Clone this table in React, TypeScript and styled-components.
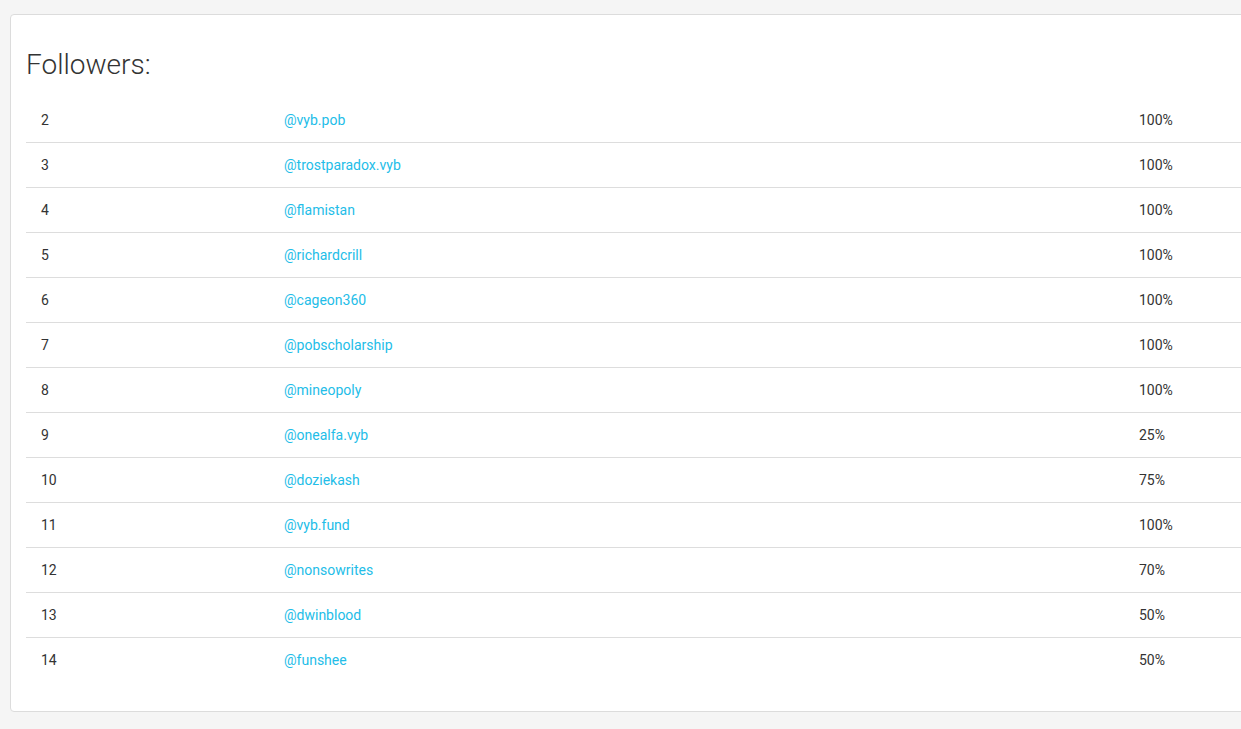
import React from 'react';
import styled, { createGlobalStyle } from 'styled-components';

const followers: [number, string, string][] = [
  [2, '@vyb.pob', '100%'],
  [3, '@trostparadox.vyb', '100%'],
  [4, '@flamistan', '100%'],
  [5, '@richardcrill', '100%'],
  [6, '@cageon360', '100%'],
  [7, '@pobscholarship', '100%'],
  [8, '@mineopoly', '100%'],
  [9, '@onealfa.vyb', '25%'],
  [10, '@doziekash', '75%'],
  [11, '@vyb.fund', '100%'],
  [12, '@nonsowrites', '70%'],
  [13, '@dwinblood', '50%'],
  [14, '@funshee', '50%'],
];

const GlobalStyle = createGlobalStyle`
  html, body {
    margin: 0;
    background: #f5f5f5;
    font-family: Roboto, 'Liberation Sans', sans-serif;
    color: #333;
    overflow: hidden;
  }
`;

const Page = styled.div`
  padding: 14px 0 0 10px;
  height: 729px;
  box-sizing: border-box;
`;

const Card = styled.div`
  width: 1260px;
  height: 698px;
  box-sizing: border-box;
  background: #fff;
  border: 1px solid #dcdcdc;
  border-radius: 4px;
  padding: 32px 15px 0 15px;
`;

const Title = styled.h3`
  margin: 0 0 15px 0;
  font-size: 28px;
  font-weight: 300;
  line-height: 36px;
  color: #333;
`;

const Row = styled.div`
  display: grid;
  grid-template-columns: 258px 855px 1fr;
  height: 45px;
  align-items: center;
  font-size: 14px;
  line-height: 20px;
  box-sizing: border-box;
  border-top: 1px solid #ddd;
  &:first-of-type {
    border-top: none;
    height: 44px;
  }
`;

const Cell = styled.div`
  padding-left: 15px;
`;

const Handle = styled.a`
  color: #23bde8;
  text-decoration: none;
`;

export default function App() {
  return (
    <Page>
      <GlobalStyle />
      <Card>
        <Title>Followers:</Title>
        <div>
          {followers.map(([n, handle, pct]) => (
            <Row key={n}>
              <Cell>{n}</Cell>
              <div>
                <Handle href="#">{handle}</Handle>
              </div>
              <div>{pct}</div>
            </Row>
          ))}
        </div>
      </Card>
    </Page>
  );
}
